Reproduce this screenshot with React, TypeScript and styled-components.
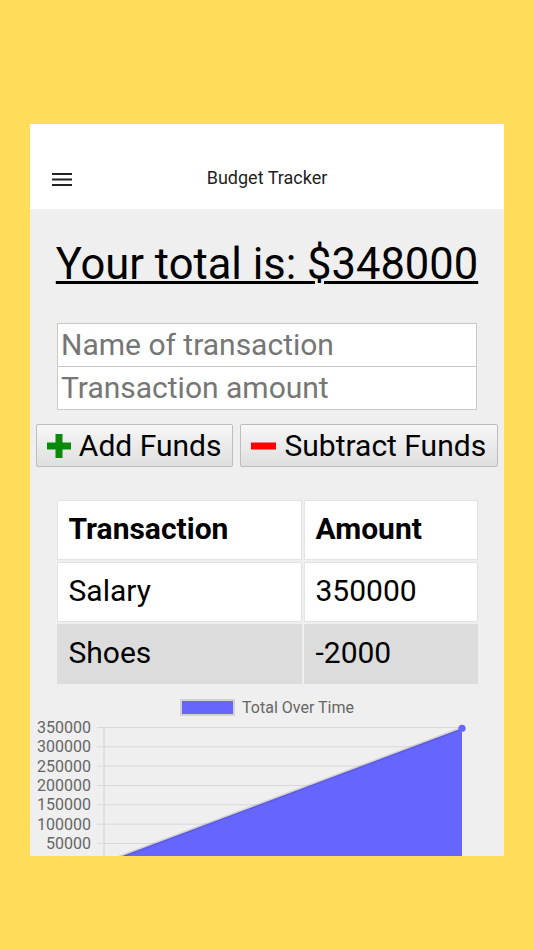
import React from "react";
import styled, { createGlobalStyle } from "styled-components";

const Global = createGlobalStyle`
  html, body { margin: 0; padding: 0; background: #ffdc5a; }
  body { font-family: Roboto, "Noto Sans", sans-serif; }
  * { box-sizing: border-box; }
`;

const Page = styled.div`
  width: 534px;
  height: 950px;
  padding-top: 124px;
  background: #ffdc5a;
`;

const Phone = styled.div`
  width: 474px;
  height: 732px;
  margin: 0 auto;
  background: #efefef;
  overflow: hidden;
  display: flex;
  flex-direction: column;
`;

const Header = styled.header`
  height: 85px;
  flex: none;
  padding-top: 24px;
  background: #fff;
  display: grid;
  grid-template-columns: 1fr auto 1fr;
  align-items: center;
`;

const MenuButton = styled.div`
  padding-left: 22px;
  display: flex;
  align-items: center;
`;

const Title = styled.div`
  font-size: 18px;
  color: #1f1f1f;
  margin-bottom: 2px;
`;

const Total = styled.h1`
  margin: 30px 0 0;
  font-size: 43.5px;
  font-weight: 400;
  line-height: 52px;
  text-align: center;
  color: #000;
  text-decoration: underline;
  text-decoration-thickness: 3px;
  text-underline-offset: 2px;
`;

const Form = styled.div`
  margin: 32px auto 0;
  width: 420px;
  display: flex;
  flex-direction: column;
`;

const Field = styled.input<{ $joined?: boolean }>`
  width: 100%;
  height: ${(p) => (p.$joined ? "43px" : "44px")};
  border: 1px solid #c9c9c9;
  border-top: ${(p) => (p.$joined ? "none" : "1px solid #c9c9c9")};
  background: #fff;
  padding: 0 3px 1px;
  font-family: Roboto, sans-serif;
  font-size: 30px;
  color: #222;
  outline: none;
  &::placeholder { color: #767676; }
`;

const Buttons = styled.div`
  margin-top: 14px;
  display: flex;
  justify-content: center;
  gap: 7px;
`;

const Button = styled.button`
  height: 43px;
  padding: 0 11px 0 10px;
  display: flex;
  align-items: center;
  gap: 8px;
  border: 1px solid #bdbdbd;
  border-radius: 2px;
  background: linear-gradient(#f7f7f7, #dfdfdf);
  font-family: Roboto, sans-serif;
  font-size: 30px;
  color: #000;
`;

const Table = styled.table`
  margin: 31px auto 0;
  border-collapse: separate;
  border-spacing: 2px;
`;

const Cell = styled.td<{ $head?: boolean; $shade?: boolean; $w: number }>`
  width: ${(p) => p.$w}px;
  height: 60px;
  padding: 0 0 3px 11px;
  border: 1px solid ${(p) => (p.$shade ? "#dcdcdc" : "#e3e3e3")};
  background: ${(p) => (p.$shade ? "#dcdcdc" : "#fff")};
  font-size: 30px;
  font-weight: ${(p) => (p.$head ? 700 : 400)};
  color: #000;
  text-align: left;
  vertical-align: middle;
`;

const Legend = styled.div`
  margin-top: 13px;
  display: flex;
  justify-content: center;
  align-items: center;
  gap: 7px;
  height: 17px;
`;

const LegendSwatch = styled.span`
  width: 55px;
  height: 17px;
  background: #6666ff;
  border: 2px solid #d2d2d2;
`;

const LegendText = styled.span`
  font-size: 16px;
  color: #666;
`;

const ChartSvg = styled.svg`
  display: block;
  margin-top: 1px;
  flex: none;
`;

const Menu = () => (
  <svg width="20" height="14" viewBox="0 0 20 14">
    <rect x="0" y="1" width="20" height="2" fill="#222" />
    <rect x="0" y="6.5" width="20" height="2" fill="#222" />
    <rect x="0" y="12" width="20" height="2" fill="#222" />
  </svg>
);

const Plus = () => (
  <svg width="24" height="24" viewBox="0 0 24 24">
    <rect x="8.5" y="0" width="7" height="24" fill="#0a8a0a" />
    <rect x="0" y="8.5" width="24" height="7" fill="#0a8a0a" />
  </svg>
);

const Minus = () => (
  <svg width="25" height="8" viewBox="0 0 25 8">
    <rect x="0" y="0.5" width="25" height="7" fill="#f00" />
  </svg>
);

const ticks = [350000, 300000, 250000, 200000, 150000, 100000, 50000];

const Chart = () => {
  const top = 10.5;
  const step = 19.33;
  const zeroY = top + step * 7;
  const x0 = 74;
  const x1 = 432;
  const valY = zeroY - (348000 / 50000) * step;
  return (
    <ChartSvg width="474" height="145" viewBox="0 0 474 145">
      <line x1={x0} y1={top} x2={x0} y2={145} stroke="#d0d0d0" strokeWidth="1" />
      {ticks.map((t, i) => {
        const y = top + i * step;
        return (
          <g key={t}>
            <line x1={67} y1={y} x2={x1} y2={y} stroke="#d9d9d9" strokeWidth="1" />
            <text
              x={61}
              y={y + 5.5}
              textAnchor="end"
              fontSize="16"
              fill="#666"
              fontFamily="Roboto, sans-serif"
            >
              {t}
            </text>
          </g>
        );
      })}
      <polygon points={`${x0},${zeroY} ${x1},${valY} ${x1},${zeroY}`} fill="#6666ff" />
      <line x1={x0} y1={zeroY} x2={x1} y2={valY} stroke="rgba(0,0,0,0.12)" strokeWidth="3" />
      <circle cx={x1} cy={valY} r="3.6" fill="#6666ff" />
    </ChartSvg>
  );
};

export default function App() {
  return (
    <Page>
      <Global />
      <Phone>
        <Header>
          <MenuButton>
            <Menu />
          </MenuButton>
          <Title>Budget Tracker</Title>
          <div />
        </Header>
        <Total>Your total is: $348000</Total>
        <Form>
          <Field placeholder="Name of transaction" />
          <Field $joined placeholder="Transaction amount" />
        </Form>
        <Buttons>
          <Button>
            <Plus />
            Add Funds
          </Button>
          <Button>
            <Minus />
            Subtract Funds
          </Button>
        </Buttons>
        <Table>
          <tbody>
            <tr>
              <Cell $head $w={245}>Transaction</Cell>
              <Cell $head $w={174}>Amount</Cell>
            </tr>
            <tr>
              <Cell $w={245}>Salary</Cell>
              <Cell $w={174}>350000</Cell>
            </tr>
            <tr>
              <Cell $shade $w={245}>Shoes</Cell>
              <Cell $shade $w={174}>-2000</Cell>
            </tr>
          </tbody>
        </Table>
        <Legend>
          <LegendSwatch />
          <LegendText>Total Over Time</LegendText>
        </Legend>
        <Chart />
      </Phone>
    </Page>
  );
}
